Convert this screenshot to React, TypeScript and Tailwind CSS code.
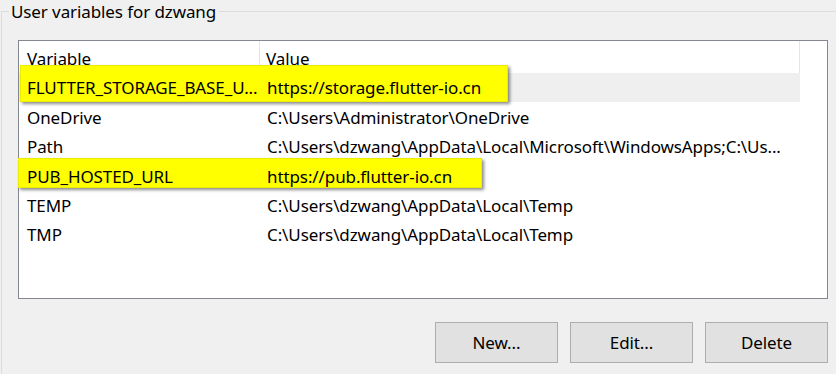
import React from 'react'

const rows = [
  { name: 'FLUTTER_STORAGE_BASE_U...', value: 'https://storage.flutter-io.cn', selected: true },
  { name: 'OneDrive', value: 'C:\\Users\\Administrator\\OneDrive' },
  { name: 'Path', value: 'C:\\Users\\dzwang\\AppData\\Local\\Microsoft\\WindowsApps;C:\\Us...' },
  { name: 'PUB_HOSTED_URL', value: 'https://pub.flutter-io.cn' },
  { name: 'TEMP', value: 'C:\\Users\\dzwang\\AppData\\Local\\Temp' },
  { name: 'TMP', value: 'C:\\Users\\dzwang\\AppData\\Local\\Temp' },
]

function Highlight({ className }: { className: string }) {
  return (
    <div
      className={`absolute z-10 bg-[#ffff00] border border-[#ecec00] shadow-[2px_2px_3px_rgba(0,0,0,0.45)] ${className}`}
    />
  )
}

export default function App() {
  return (
    <div
      className="w-[836px] h-[374px] bg-[#f0f0f0] overflow-hidden text-[17px] tracking-[-0.1px] text-black"
      style={{ fontFamily: '"Noto Sans", "Open Sans", sans-serif' }}
    >
      {/* group box */}
      <div className="relative mt-[11px] ml-[1px] h-[400px] border-l border-t border-[#dcdcdc] pl-[16px] pt-[28px]">
        <span className="absolute -top-[12px] left-[7px] bg-[#f0f0f0] px-[2px] leading-[24px]">
          User variables for dzwang
        </span>

        {/* list view */}
        <div className="relative w-[810px] h-[259px] border border-[#828790] bg-white">
          <Highlight className="left-[1px] top-[24px] w-[488px] h-[37px]" />
          <Highlight className="left-[-1px] top-[117px] w-[464px] h-[30px]" />

          <div className="w-[781px]">
            <div className="flex h-[32px] items-center">
              <div className="w-[241px] h-full flex items-center pl-[8px] pt-[3px] border-r border-[#e5e5e5]">
                <span className="relative z-20">Variable</span>
              </div>
              <div className="flex-1 h-full flex items-center pl-[6px] pt-[3px] border-r border-[#e5e5e5]">
                <span className="relative z-20">Value</span>
              </div>
            </div>
            {rows.map(r => (
              <div
                key={r.name}
                className={`flex h-[29.4px] items-center whitespace-nowrap pt-[1px] ${r.selected ? 'bg-[#efefef]' : ''}`}
              >
                <div className="w-[241px] pl-[8px] overflow-hidden">
                  <span className="relative z-20">{r.name}</span>
                </div>
                <div className="flex-1 pl-[7px] overflow-hidden">
                  <span className="relative z-20">{r.value}</span>
                </div>
              </div>
            ))}
          </div>
        </div>

        {/* buttons */}
        <div className="flex w-[810px] justify-end gap-[12px] mt-[23px]">
          {['New...', 'Edit...', 'Delete'].map(b => (
            <button
              key={b}
              className="w-[123px] h-[41px] bg-[#e1e1e1] border border-[#adadad] flex items-center justify-center"
            >
              {b}
            </button>
          ))}
        </div>
      </div>
    </div>
  )
}
